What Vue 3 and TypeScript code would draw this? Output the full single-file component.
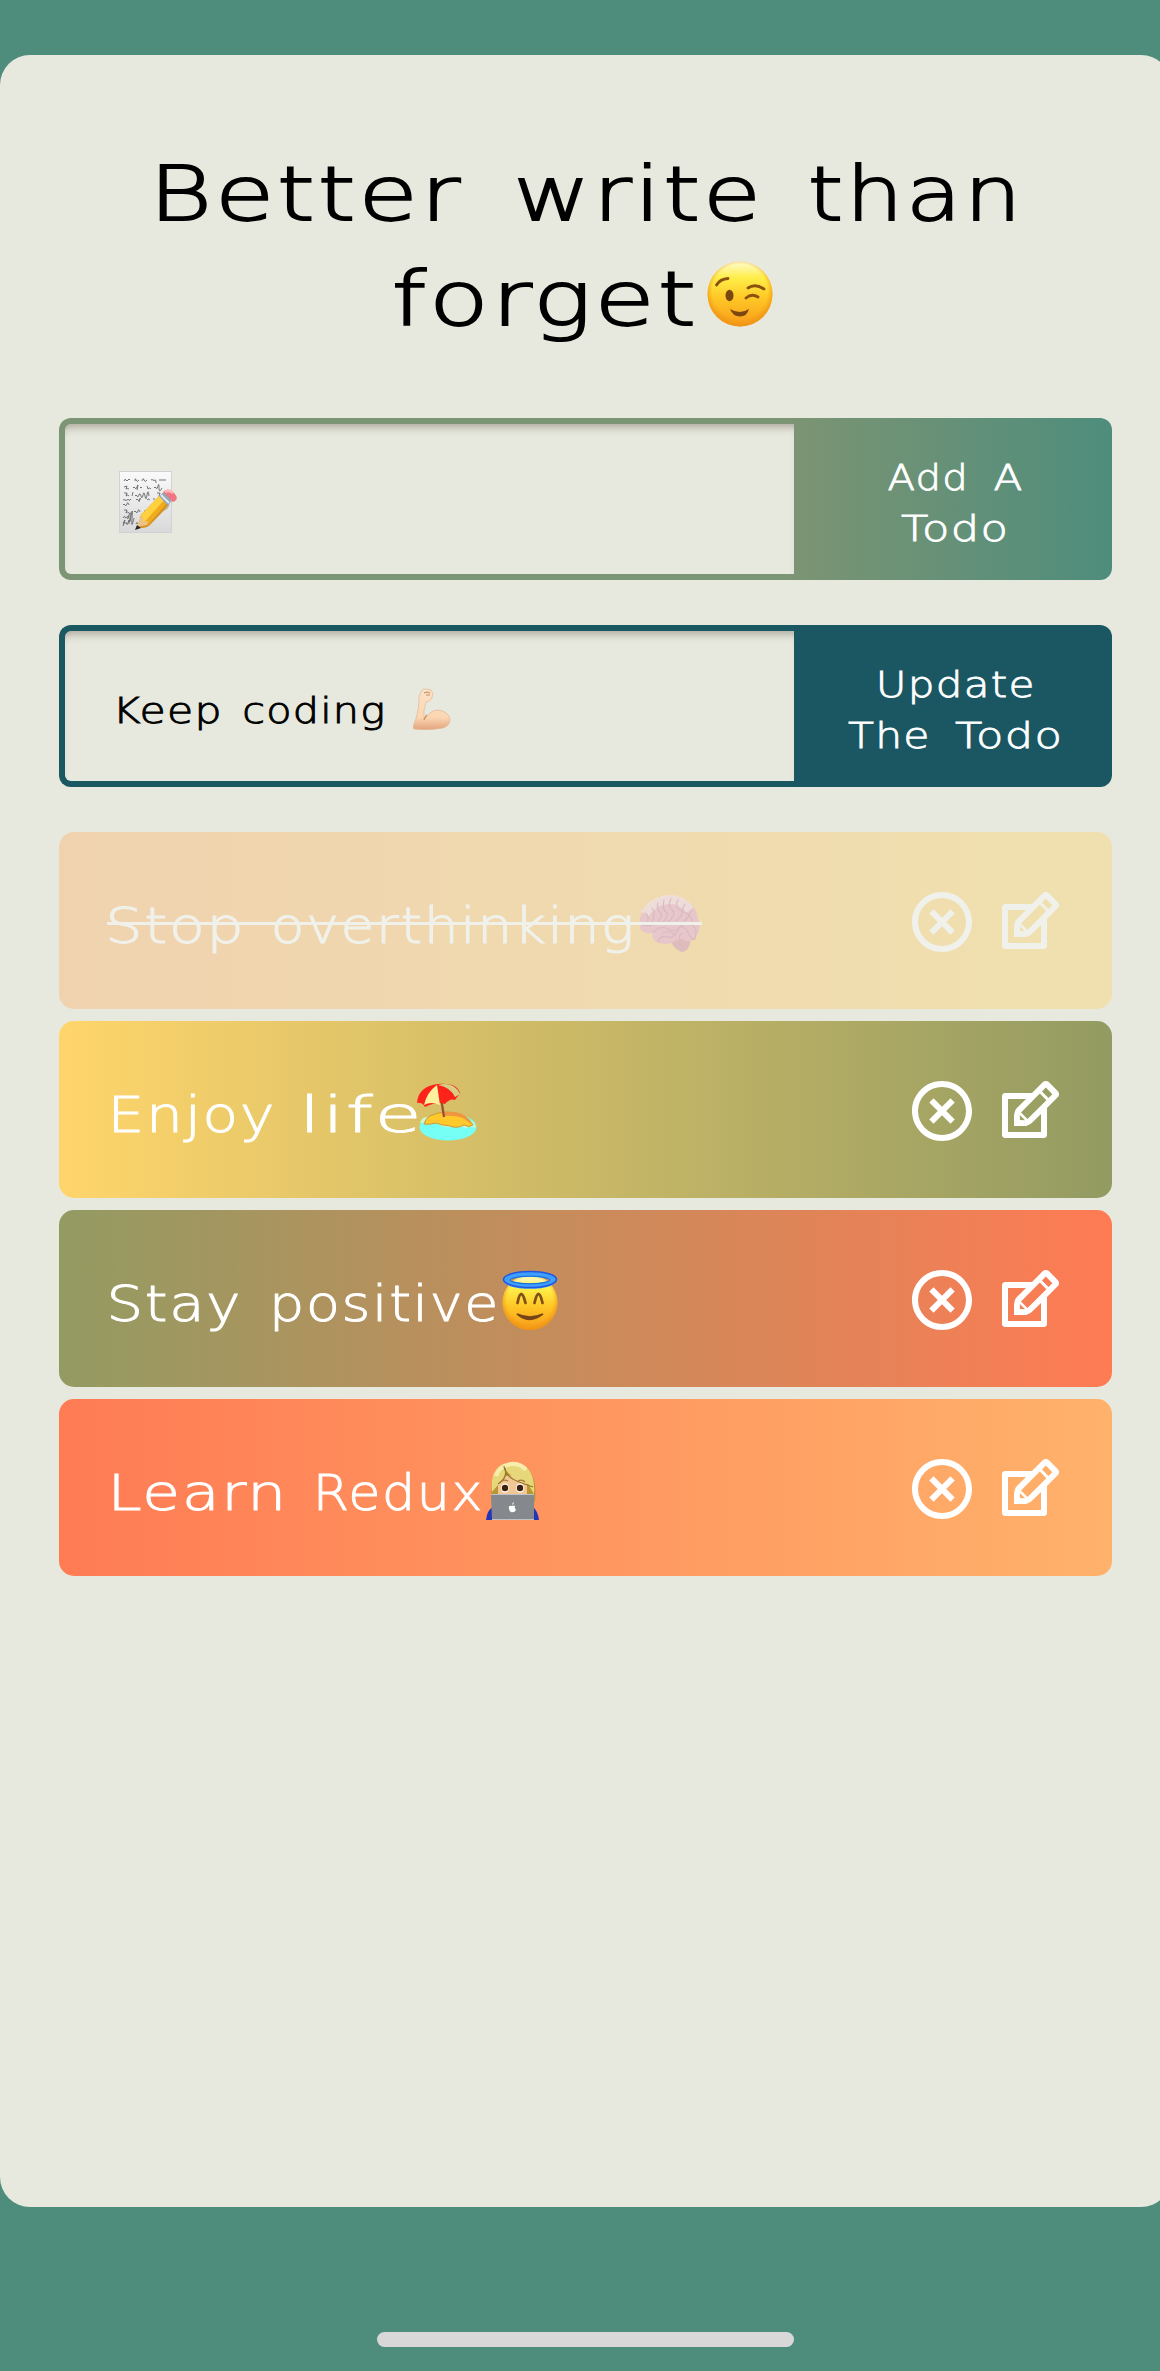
<script setup lang="ts">
interface Word { text: string; width: number; gap: number }
interface Todo { id: string; words: Word[]; emojiGap: number; emoji: string; from: string; to: string; done?: boolean; inset: number }

const title: Word[][] = [
  [
    { text: 'Better', width: 306, gap: 0 },
    { text: 'write', width: 241, gap: 56 },
    { text: 'than', width: 205, gap: 53 },
  ],
  [{ text: 'forget', width: 302, gap: 0 }],
]

const draft: Word[] = [
  { text: 'Keep', width: 101, gap: 0 },
  { text: 'coding', width: 141, gap: 27 },
]

const addLabel: Word[][] = [
  [{ text: 'Add', width: 77, gap: 0 }, { text: 'A', width: 27, gap: 29 }],
  [{ text: 'Todo', width: 106, gap: 0 }],
]

const updateLabel: Word[][] = [
  [{ text: 'Update', width: 155, gap: 0 }],
  [{ text: 'The', width: 80, gap: 0 }, { text: 'Todo', width: 106, gap: 27 }],
]

const todos: Todo[] = [
  { id: 'brain', emoji: 'brain', emojiGap: 4, from: '#ffb26b', to: '#ffd56b', done: true, inset: 48,
    words: [{ text: 'Stop', width: 132, gap: 0 }, { text: 'overthinking', width: 364, gap: 33 }] },
  { id: 'beach', emoji: 'beach', emojiGap: 4, from: '#ffd56b', to: '#939b62', inset: 51,
    words: [{ text: 'Enjoy', width: 160, gap: 0 }, { text: 'life', width: 111, gap: 32 }] },
  { id: 'angel', emoji: 'angel', emojiGap: 6, from: '#939b62', to: '#ff7b54', inset: 49,
    words: [{ text: 'Stay', width: 129, gap: 0 }, { text: 'positive', width: 224, gap: 34 }] },
  { id: 'coder', emoji: 'coder', emojiGap: 7, from: '#ff7b54', to: '#ffb26b', inset: 51,
    words: [{ text: 'Learn', width: 169, gap: 0 }, { text: 'Redux', width: 164, gap: 36 }] },
]

/* Widens the letters of a word so that they fill its column from edge to edge. */
const vFit = {
  mounted(el: HTMLElement, binding: { value: number }) {
    const ctx = document.createElement('canvas').getContext('2d')
    if (!ctx) return
    const style = getComputedStyle(el)
    const text = el.textContent ?? ''
    const size = parseFloat(style.fontSize)
    ctx.font = `${style.fontWeight} ${style.fontSize} ${style.fontFamily}`
    const m = ctx.measureText(text)
    const ink = m.actualBoundingBoxRight + m.actualBoundingBoxLeft
    const room = (binding.value - ink) / Math.max(1, text.length - 1)
    const spacing = text.length > 1 ? Math.max(0, Math.min(room * 0.4, size * 0.03)) : 0
    const scale = 0.98 * binding.value / (ink + spacing * (text.length - 1))
    el.style.letterSpacing = `${spacing}px`
    el.style.transform = `translateX(${m.actualBoundingBoxLeft * scale * 0.35}px) scaleX(${scale})`
  },
}
</script>

<template>
  <div class="screen">
    <main class="panel">
      <h1 class="title">
        <span v-for="(line, i) in title" :key="i" class="line">
          <span v-for="w in line" :key="w.text" v-fit="w.width" class="word" :style="{ width: w.width + 'px', marginLeft: w.gap + 'px' }">{{ w.text }}</span>
          <svg v-if="i === 1" class="wink" viewBox="0 0 66 66">
            <defs>
              <linearGradient id="face" x1="0" y1="0" x2="0" y2="1">
                <stop offset="0" stop-color="#fffbd0" /><stop offset=".25" stop-color="#ffee48" />
                <stop offset=".55" stop-color="#ffc926" /><stop offset="1" stop-color="#f79a1a" />
              </linearGradient>
              <radialGradient id="rim" cx=".5" cy=".46" r=".54">
                <stop offset=".78" stop-color="#f39a17" stop-opacity="0" /><stop offset="1" stop-color="#ee9312" stop-opacity=".95" />
              </radialGradient>
            </defs>
            <circle cx="33" cy="33" r="32.5" fill="url(#face)" />
            <circle cx="33" cy="33" r="32.5" fill="url(#rim)" />
            <ellipse cx="22.5" cy="34.5" rx="4" ry="5.8" fill="#7a4710" />
            <path d="M9.5 24Q13 18 21 17.5M41 27Q48 22 57 28M39 37Q45 32 51 36" fill="none" stroke="#8a520f" stroke-width="2.8" stroke-linecap="round" />
            <path d="M23 48Q33 54 42 48Q40 55.500 33 55.500Q26 55.500 23 48Z" fill="#7a4710" />
          </svg>
        </span>
      </h1>

      <form class="entry add" @submit.prevent>
        <div class="field">
          <svg class="memo" viewBox="0 0 58 62">
            <defs>
              <linearGradient id="paper" x1="0" y1="0" x2="0" y2="1"><stop offset="0" stop-color="#fafafa" /><stop offset="1" stop-color="#d9d9d9" /></linearGradient>
            </defs>
            <rect x=".5" y=".5" width="52" height="61" fill="url(#paper)" stroke="#d2d2d6" />
            <g fill="none" stroke="#686868" stroke-width=".9">
              <path d="M5 10q1-3 2-1t2 0 2 0M16 10q0-4 1-1t3 0M23 10q1-4 2-1t3 0M32 9q1-1 2 0t2 0 1 3M40 9h7" />
              <path d="M5 16l3-1-1 3q2-1 3 0M14 17q1-2 2 0t2-1 1-2-1 5M21 17q1-2 2 0M28 15l1 3q2-2 3 0M35 17q1-2 2 0t2-2 1 2 3 0" />
              <path d="M5 22l3 0-1 3q2-2 3 0M13 25l1-4M16 25q1-2 2 0t2-1 2 1 2-1 2 1 2-1 2 1M38 22h3l-1 3" />
              <path d="M4 29q1-1 2 0t2 0 2 0 2-1M17 29q1-2 2 0t2-1-1 3M28 29q1-2 3 0M35 27v2" />
              <path d="M4 34q1-2 2 0t2-1 2 1M5 39h3l-1 3q2-2 3 0M15 41q1-2 2 0t2-1 2 1M25 40h2" />
              <path d="M4 47q2-3 2-1t2 0 1 1 1-3 1 3 1-2 1 2 2 0M4 55l2-6-2 3h3q1-1 1 1t2-4v4M17 53q1-3 2 0" />
            </g>
            <path d="M18 58q15-4 37-29L57 25 48 38Z" fill="#777" opacity=".55" />
            <path d="M22 44L40 25 50 34 31 54Q28 57 22 57L19 55Z" fill="#d7921d" />
            <path d="M22 44L40 25 46 29 24 53Z" fill="#ffd13e" /><path d="M24 53L45 29 48 32 29 54Z" fill="#f0ac20" />
            <path d="M18 56L21 46 25 47 24 51 29 50 28 54Z" fill="#edc18a" /><path d="M16 59L18 54 22 57Z" fill="#262626" />
            <path d="M40 25L45 21 53 29 49 35Z" fill="#91a7bb" /><path d="M42 24L50 32" stroke="#e0e7ef" stroke-width="2" />
            <path d="M44 21Q49 16 55 22T54 31Z" fill="#ef7681" /><path d="M46 21Q50 18 54 22" fill="none" stroke="#ffb7b7" stroke-width="3" />
          </svg>
        </div>
        <button class="action" type="submit">
          <span v-for="(line, i) in addLabel" :key="i" class="line">
            <span v-for="w in line" :key="w.text" v-fit="w.width" class="word" :style="{ width: w.width + 'px', marginLeft: w.gap + 'px' }">{{ w.text }}</span>
          </span>
        </button>
      </form>

      <form class="entry update" @submit.prevent>
        <div class="field">
          <span class="draft">
            <span v-for="w in draft" :key="w.text" v-fit="w.width" class="word" :style="{ width: w.width + 'px', marginLeft: w.gap + 'px' }">{{ w.text }}</span>
          </span>
          <svg class="arm" viewBox="0 0 38 42">
            <defs>
              <linearGradient id="skin" x1="0" y1="0" x2="0" y2="1"><stop offset="0" stop-color="#fae3c8" /><stop offset=".7" stop-color="#fbd6b2" /><stop offset="1" stop-color="#e3a37e" /></linearGradient>
            </defs>
            <path d="M8 4Q10 0 13 1L18 2Q21 5 19 10Q17 14 13 14Q10 22 11 32Q17 22 25 22Q34 23 37 30Q38 37 30 40Q16 43 1 41Q-1 40 1 36Q5 27 6 13Q5 8 8 4Z" fill="url(#skin)" stroke="#e5b592" stroke-width=".7" />
            <path d="M11 32Q12 29 14 27M11 5L14 4 17 5M13 7L17 7" fill="none" stroke="#c98b61" stroke-width="1.100" />
          </svg>
        </div>
        <button class="action" type="submit">
          <span v-for="(line, i) in updateLabel" :key="i" class="line">
            <span v-for="w in line" :key="w.text" v-fit="w.width" class="word" :style="{ width: w.width + 'px', marginLeft: w.gap + 'px' }">{{ w.text }}</span>
          </span>
        </button>
      </form>

      <ul class="list">
        <li v-for="t in todos" :key="t.id" class="todo" :class="{ done: t.done }"
          :style="{ background: `linear-gradient(90deg, ${t.from}, ${t.to})`, paddingLeft: t.inset + 'px' }">
          <div class="label">
            <span v-for="w in t.words" :key="w.text" v-fit="w.width" class="word" :style="{ width: w.width + 'px', marginLeft: w.gap + 'px' }">{{ w.text }}</span>
            <svg class="emoji" viewBox="0 0 60 60" :style="{ marginLeft: t.emojiGap + 'px' }">
              <g v-if="t.emoji === 'brain'">
                <path d="M31 45Q34 41 44 43L51 46Q49 59 42 59Q35 57 31 49Z" fill="#d17a8e" />
                <path d="M1 37Q-2 30 1 22Q3 14 10 12Q17 4 29 3Q42 3 49 10Q57 15 58 26Q62 34 57 42Q54 49 46 48Q39 44 34 49Q25 53 17 49Q10 45 13 40Q6 42 1 37Z" fill="#e896ae" />
                <path d="M5 21Q12 9 25 7Q40 4 50 17" fill="none" stroke="#fad8dc" stroke-width="9" opacity=".8" />
                <path d="M2 32Q9 34 15 31M5 20Q10 22 7 31M12 15Q16 20 12 29M18 10Q16 16 20 19T17 30M24 7Q22 16 26 19T22 30M31 6Q27 13 32 17T28 29M38 7Q34 14 40 17T36 28M45 11Q40 18 46 20T44 28M52 18Q47 22 51 25T48 32M13 39Q21 32 28 36T41 33 56 36M18 49Q20 42 27 44T38 37 49 41 56 37M23 40Q29 37 34 41M40 46Q38 42 43 40" fill="none" stroke="#c87490" stroke-width="1.100" stroke-linecap="round" />
              </g>
              <g v-else-if="t.emoji === 'beach'">
                <ellipse cx="31" cy="45" rx="28.500" ry="13.500" fill="#75fff5" />
                <path d="M3 41Q5 33 14 36L50 37Q58 39 59 46Q54 44 49 46Q41 43 35 45Q27 46 21 42Q11 40 3 41Z" fill="#cbf7d0" />
                <path d="M7 42Q9 31 30 30Q50 31 56 43Q52 46 47 43Q40 47 33 44Q23 43 19 41Q12 43 7 42Z" fill="#ffc82b" stroke="#c89a40" stroke-width="1" />
                <path d="M27 30Q49 28 54 42Q45 32 27 34Z" fill="#ee9640" />
                <path d="M22 3L27 35" stroke="#985033" stroke-width="2.300" />
                <path d="M0 21Q1 5 20 2Q40 0 43 11Q41 14 38 18Q33 16 28 22Q20 19 8 25Q5 20 0 21Z" fill="#fc241a" />
                <path d="M7 23Q10 10 20 3L23 23Q14 19 7 23Z" fill="#fff09d" /><path d="M21 3Q37-1 43 12L38 15Q33 5 21 3Z" fill="#d8cd85" />
              </g>
              <g v-else-if="t.emoji === 'angel'">
                <ellipse cx="29" cy="31.500" rx="27.500" ry="27.500" fill="url(#face)" />
                <ellipse cx="29" cy="31.500" rx="27.500" ry="27.500" fill="url(#rim)" />
                <ellipse cx="29" cy="9" rx="23.500" ry="6" fill="none" stroke="#3d9fff" stroke-width="5.500" />
                <ellipse cx="29" cy="8.500" rx="26.500" ry="8" fill="none" stroke="#2257df" stroke-width="1.600" />
                <ellipse cx="29" cy="9" rx="20" ry="3.800" fill="none" stroke="#1868ce" stroke-width="1" />
                <path d="M16.500 32Q20 14 24.500 32M33.500 32Q37.500 14 41.500 32" fill="none" stroke="#80501b" stroke-width="2.800" stroke-linecap="round" />
                <path d="M16 43Q28 54 42 43Q29 49 16 43Z" fill="#764517" stroke="#764517" stroke-width="1.500" />
              </g>
              <g v-else>
                <path d="M6 42Q1 5 27 2Q53 5 49 42Z" fill="#b79732" />
                <path d="M0 60Q1 50 7 47H47Q52 51 53 60Z" fill="#2635b8" />
                <path d="M12 38V19Q25 13 31 17L41 23V38Z" fill="#f1c795" />
                <path d="M6 32Q3 3 27 2Q50 4 48 34L42 24Q30 23 19 9Q23 20 12 25Z" fill="#e7d77b" />
                <path d="M10 16Q13 6 25 4Q34 3 40 10" fill="none" stroke="#f7edac" stroke-width="4" />
                <path d="M18 6Q19 17 33 22T47 27M19 8Q22 18 12 24" fill="none" stroke="#947726" stroke-width="1.200" />
                <ellipse cx="19" cy="28" rx="4" ry="4.500" fill="#fff" /><ellipse cx="34" cy="28" rx="4" ry="4.500" fill="#fff" />
                <circle cx="19" cy="28" r="3.200" fill="#3b220f" /><circle cx="34" cy="28" r="3.200" fill="#3b220f" />
                <path d="M14 22Q18 19 22 21M32 21Q36 19 39 22" fill="none" stroke="#aa7a3e" stroke-width="1.300" />
                <path d="M5 34H48V60H6Z" fill="#85888d" /><path d="M5 34.500H48M6 59.500H48" stroke="#bfc3c8" stroke-width="1" />
                <path d="M26 46Q22 45 23 49Q24 53 26 52Q28 53 30 50Q28 48 29 46Q28 45 26 46ZM26 45Q26 43 28 42Q28 44 26 45Z" fill="#fff" />
              </g>
            </svg>
          </div>
          <div class="tools">
            <svg viewBox="0 0 24 24"><path d="M12 22C6.477 22 2 17.523 2 12S6.477 2 12 2s10 4.477 10 10-4.477 10-10 10zm0-2a8 8 0 1 0 0-16 8 8 0 0 0 0 16zm0-9.414l2.828-2.829 1.415 1.415L13.414 12l2.829 2.828-1.415 1.415L12 13.414l-2.828 2.829-1.415-1.415L10.586 12 7.757 9.172l1.415-1.415L12 10.586z" /></svg>
            <svg viewBox="0 0 24 24"><path d="M21.561 5.318l-2.879-2.879c-.293-.293-.677-.439-1.061-.439-.385 0-.768.146-1.061.439l-3.56 3.561h-9c-.552 0-1 .447-1 1v13c0 .553.448 1 1 1h13c.552 0 1-.447 1-1v-9l3.561-3.561c.293-.293.439-.677.439-1.061s-.146-.767-.439-1.06zm-10.061 9.354l-2.172-2.172 6.293-6.293 2.172 2.172-6.293 6.293zm-2.561-1.339l1.756 1.728-1.695-.061-.061-1.667zm7.061 5.667h-11v-11h6l-3.18 3.18c-.293.293-.478.812-.629 1.289-.16.5-.191 1.056-.191 1.47v3.061h3.061c.414 0 1.108-.1 1.571-.29.464-.19.896-.347 1.188-.64l3.181-3.07v6zm2.5-11.328l-2.172-2.172 1.293-1.293 2.171 2.172-1.292 1.293z" /></svg>
          </div>
        </li>
      </ul>
    </main>
    <div class="home-bar"></div>
  </div>
</template>

<style>
html, body { background: #4e8d7c; }
</style>

<style scoped>
.screen {
  width: 100%;
  height: 2371px;
  padding-top: 55px;
  box-sizing: border-box;
  overflow: hidden;
  background: #4e8d7c;
  font-family: "DejaVu Sans", sans-serif;
  font-weight: 200;
}
.panel {
  width: 1171px;
  height: 2152px;
  padding: 87px 59px 0;
  box-sizing: border-box;
  border-radius: 30px;
  background: #e7e9de;
}
.line { display: flex; justify-content: center; align-items: center; white-space: nowrap; }
.word { display: block; flex: none; white-space: nowrap; text-align: left; transform-origin: 0 50%; }
.title {
  margin: 0 0 66px;
  font-size: 75px;
  line-height: 105px;
  font-weight: 200;
  color: #000;
  -webkit-text-stroke: 1.8px #000;
}
.title .line { margin-right: 5px; }
.wink { width: 66px; height: 66px; margin: -11px 0 0 12px; flex: none; -webkit-text-stroke: 0; }
.entry {
  display: flex;
  height: 162px;
  margin-bottom: 45px;
  font-size: 35px;
}
.field {
  display: flex;
  align-items: center;
  width: 735px;
  box-sizing: border-box;
  border: 6px solid #7c9574;
  border-right: 0;
  border-radius: 12px 0 0 12px;
  padding: 6px 0 0 50px;
  box-shadow: inset 0 9px 8px -6px rgba(90, 75, 65, 0.42);
}
.add .field { padding-left: 54px; }
.memo { width: 58px; height: 62px; }
.draft { display: flex; padding-top: 3px; -webkit-text-stroke: 0.9px #000; }
.arm { width: 38px; height: 42px; margin-left: 29px; }
.action {
  width: 318px;
  padding: 9px 0 0 2px;
  border: 0;
  border-radius: 0 12px 12px 0;
  font: inherit;
  line-height: 51px;
  color: #fff;
  background: linear-gradient(90deg, #7c9473, #4e8d7c);
  -webkit-text-stroke: 0.8px #fff;
}
.update .field { border-color: #1b5962; }
.update .action { background: #1b5762; }
.list {
  display: flex;
  flex-direction: column;
  gap: 12px;
  margin: 0;
  padding: 0;
  list-style: none;
}
.todo {
  display: flex;
  align-items: center;
  justify-content: space-between;
  height: 177px;
  padding-right: 47px;
  box-sizing: border-box;
  border-radius: 15px;
  color: #fff;
  font-size: 50px;
}
.done { opacity: 0.4; }
.label {
  position: relative;
  display: flex;
  line-height: 60px;
  padding-top: 10px;
  -webkit-text-stroke: 1px #fff;
}
.done .label::after {
  content: "";
  position: absolute;
  left: 0;
  right: -2px;
  top: 36px;
  height: 3px;
  background: #fff;
}
.emoji { width: 60px; height: 60px; margin-top: -3px; overflow: visible; }
.tools { display: flex; gap: 15px; padding-top: 3px; }
.tools svg { width: 72px; height: 72px; fill: #fff; }
.home-bar {
  width: 417px;
  height: 15px;
  margin: 125px 0 0 377px;
  border-radius: 8px;
  background: #d8d8d8;
}
</style>
